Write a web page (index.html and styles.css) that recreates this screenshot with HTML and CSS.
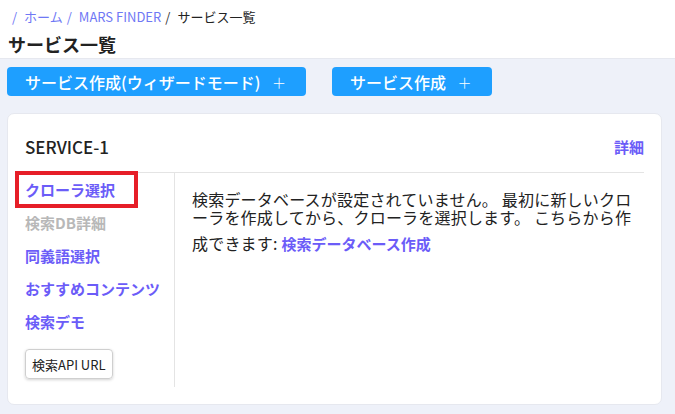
FILE: index.html
```html
<!DOCTYPE html>
<html lang="ja">
<head>
    <meta charset="UTF-8">
    <meta name="viewport" content="width=device-width, initial-scale=1.0">
    <title>サービス一覧</title>
    <link rel="stylesheet" href="styles.css">
</head>
<body>
    <div class="header">
        <div class="breadcrumb"><span class="sep link">/</span><a class="crumb" href="#">ホーム</a><span class="sep link">/</span><a class="crumb" href="#">MARS FINDER</a><span class="sep">/</span><span class="current">サービス一覧</span></div>
        <h1 class="title">サービス一覧</h1>
    </div>
    <div class="page">
        <div class="actions">
            <div class="create-button">サービス作成(ウィザードモード) <span class="plus">＋</span></div>
            <div class="create-button">サービス作成 <span class="plus">＋</span></div>
        </div>
        <div class="card">
            <div class="card-head">
                <div class="service-name">SERVICE-1</div>
                <a class="detail-link" href="#">詳細</a>
            </div>
            <div class="card-body">
                <div class="side-menu">
                    <div class="menu-item"><a class="menu-link marked" href="#">クローラ選択</a></div>
                    <div class="menu-item"><span class="menu-link disabled">検索DB詳細</span></div>
                    <div class="menu-item"><a class="menu-link" href="#">同義語選択</a></div>
                    <div class="menu-item"><a class="menu-link" href="#">おすすめコンテンツ</a></div>
                    <div class="menu-item"><a class="menu-link" href="#">検索デモ</a></div>
                    <div class="api-button">検索API URL</div>
                </div>
                <div class="content">
                    <p class="message">検索データベースが設定されていません。 最初に新しいクローラを作成してから、クローラを選択します。 こちらから作成できます: <a class="db-link" href="#">検索データベース作成</a></p>
                </div>
            </div>
        </div>
    </div>
</body>
</html>
```

FILE: styles.css
```css
body {
    margin: 0;
    font-family: "Noto Sans CJK JP", "Noto Sans", sans-serif;
    color: #222;
    background-color: #eef1f9;
    width: 675px;
    height: 414px;
    overflow: hidden;
}
a {
    text-decoration: none;
}
.header {
    background-color: white;
    padding: 7px 8px 1px;
    border-bottom: 1px solid #e6e8ef;
    height: 50px;
}
.breadcrumb {
    font-size: 13px;
    line-height: 20px;
    white-space: nowrap;
}
.sep {
    margin: 0 7px 0 4px;
    color: #333;
}
.sep.link,
.crumb {
    color: #6f78f5;
}
.current {
    color: #222;
}
.title {
    margin: 4px 0 0;
    font-size: 18px;
    line-height: 26px;
    font-weight: bold;
}
.page {
    padding: 8px 13px 0 7px;
}
.actions {
    display: flex;
    gap: 26px;
}
.create-button {
    height: 29px;
    padding: 0 20px 0 18px;
    border-radius: 4px;
    background-color: #1e9fff;
    color: white;
    font-size: 16px;
    font-weight: 500;
    display: flex;
    align-items: center;
    white-space: pre;
}
.plus {
    margin-left: 8px;
    font-weight: 300;
    font-size: 14px;
}
.card {
    margin-top: 17px;
    background-color: white;
    border: 1px solid #e6e8ef;
    border-radius: 7px;
    padding: 0 17px 17px;
}
.card-head {
    display: flex;
    justify-content: space-between;
    align-items: center;
    padding: 22px 0 14px;
    line-height: 22px;
    border-bottom: 1px solid #e4e4e4;
}
.service-name {
    font-size: 17px;
    font-weight: 500;
}
.detail-link {
    font-size: 15px;
    font-weight: bold;
    color: #6b5cf8;
}
.card-body {
    display: flex;
}
.side-menu {
    width: 149px;
    border-right: 1px solid #e4e4e4;
    padding-bottom: 8px;
}
.menu-item {
    height: 33px;
    display: flex;
    align-items: center;
}
.menu-link {
    position: relative;
    font-size: 15px;
    font-weight: bold;
    line-height: 22px;
    color: #6b5cf8;
}
.menu-link.disabled {
    color: #b8b8b8;
}
.menu-link.marked::after {
    content: "";
    position: absolute;
    left: -10px;
    top: -8px;
    width: 123px;
    height: 37px;
    box-sizing: border-box;
    border: 4px solid #e61e28;
}
.api-button {
    display: inline-block;
    margin-top: 11px;
    padding: 0 6px;
    height: 30px;
    line-height: 30px;
    font-size: 13px;
    color: #222;
    border: 1px solid #cfcfcf;
    border-radius: 4px;
    box-shadow: 0 1px 3px rgba(0, 0, 0, 0.18);
    box-sizing: border-box;
}
.content {
    flex: 1;
    padding: 17px 0 0 17px;
}
.message {
    margin: 0;
    max-width: 446px;
    font-size: 16px;
    line-height: 18px;
    letter-spacing: 0.2px;
}
.db-link {
    font-size: 15px;
    font-weight: bold;
    letter-spacing: 0;
    color: #6b5cf8;
}
.db-link::before {
    content: "";
    display: inline-block;
    height: 24px;
}
```
